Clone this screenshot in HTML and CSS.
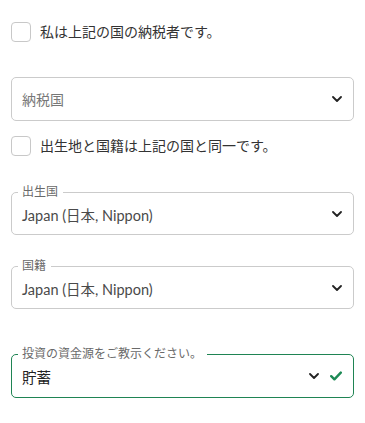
FILE: index.html
```html
<!DOCTYPE html>
<html lang="ja">
<head>
<meta charset="utf-8">
<link rel="stylesheet" href="styles.css">
</head>
<body>
<div class="page">
  <label class="check-row first">
    <span class="box"></span>
    <span class="check-text">私は上記の国の納税者です。</span>
  </label>

  <div class="select s1">
    <span class="placeholder">納税国</span>
    <span class="icons">
      <svg class="chev" width="10" height="6" viewBox="0 0 10 6"><path d="M1 1L5 5L9 1" fill="none" stroke="#222" stroke-width="1.8" stroke-linecap="round" stroke-linejoin="round"/></svg>
    </span>
  </div>

  <label class="check-row second">
    <span class="box"></span>
    <span class="check-text">出生地と国籍は上記の国と同一です。</span>
  </label>

  <div class="select s2">
    <span class="legend">出生国</span>
    <span class="value">Japan (日本, Nippon)</span>
    <span class="icons">
      <svg class="chev" width="10" height="6" viewBox="0 0 10 6"><path d="M1 1L5 5L9 1" fill="none" stroke="#222" stroke-width="1.8" stroke-linecap="round" stroke-linejoin="round"/></svg>
    </span>
  </div>

  <div class="select s3">
    <span class="legend">国籍</span>
    <span class="value">Japan (日本, Nippon)</span>
    <span class="icons">
      <svg class="chev" width="10" height="6" viewBox="0 0 10 6"><path d="M1 1L5 5L9 1" fill="none" stroke="#222" stroke-width="1.8" stroke-linecap="round" stroke-linejoin="round"/></svg>
    </span>
  </div>

  <div class="select s4 valid">
    <span class="legend">投資の資金源をご教示ください。</span>
    <span class="value dark">貯蓄</span>
    <span class="icons">
      <svg class="chev" width="10" height="6" viewBox="0 0 10 6"><path d="M1 1L5 5L9 1" fill="none" stroke="#222" stroke-width="1.8" stroke-linecap="round" stroke-linejoin="round"/></svg>
      <svg class="tick" width="12" height="10" viewBox="0 0 12 10"><path d="M1.2 5.2L4.4 8.3L10.8 1.6" fill="none" stroke="#1d8a55" stroke-width="2.4" stroke-linecap="round" stroke-linejoin="round"/></svg>
    </span>
  </div>
</div>
</body>
</html>
```

FILE: styles.css
```css
* { box-sizing: border-box; }
html, body { margin: 0; padding: 0; background: #fff; }
body {
  font-family: Lato, "Noto Sans CJK JP", sans-serif;
  color: #333;
}
.page {
  padding: 22px 11px 0 11px;
  display: flex;
  flex-direction: column;
}
.check-row {
  display: flex;
  align-items: center;
  gap: 9px;
  height: 20px;
}
.box {
  width: 20px;
  height: 20px;
  border: 1px solid #c8c8c8;
  border-radius: 4px;
  flex: none;
  background: #fff;
}
.check-text {
  font-size: 14px;
  color: #333;
  line-height: 20px;
}
.select {
  position: relative;
  height: 43px;
  border: 1px solid #cbcbcb;
  border-radius: 5px;
  display: flex;
  align-items: center;
  padding: 0 11px 0 10px;
}
.s1 { margin-top: 35px; height: 44px; }
.second { margin-top: 15px; }
.s2 { margin-top: 36px; }
.s3 { margin-top: 31px; }
.s4 { margin-top: 45px; height: 44px; }
.valid { border-color: #1f8453; }
.placeholder {
  font-size: 14px;
  color: #777;
  flex: 1;
}
.value {
  font-size: 14.5px;
  color: #4a4a4a;
  flex: 1;
  padding-top: 1px;
}
.value.dark { color: #222; }
.legend {
  position: absolute;
  top: -8px;
  left: 6px;
  padding: 0 5px 0 4px;
  background: #fff;
  font-size: 12px;
  line-height: 14px;
  color: #6a6a6a;
}
.icons {
  display: flex;
  align-items: center;
  gap: 11px;
}
.chev, .tick { display: block; }
```
